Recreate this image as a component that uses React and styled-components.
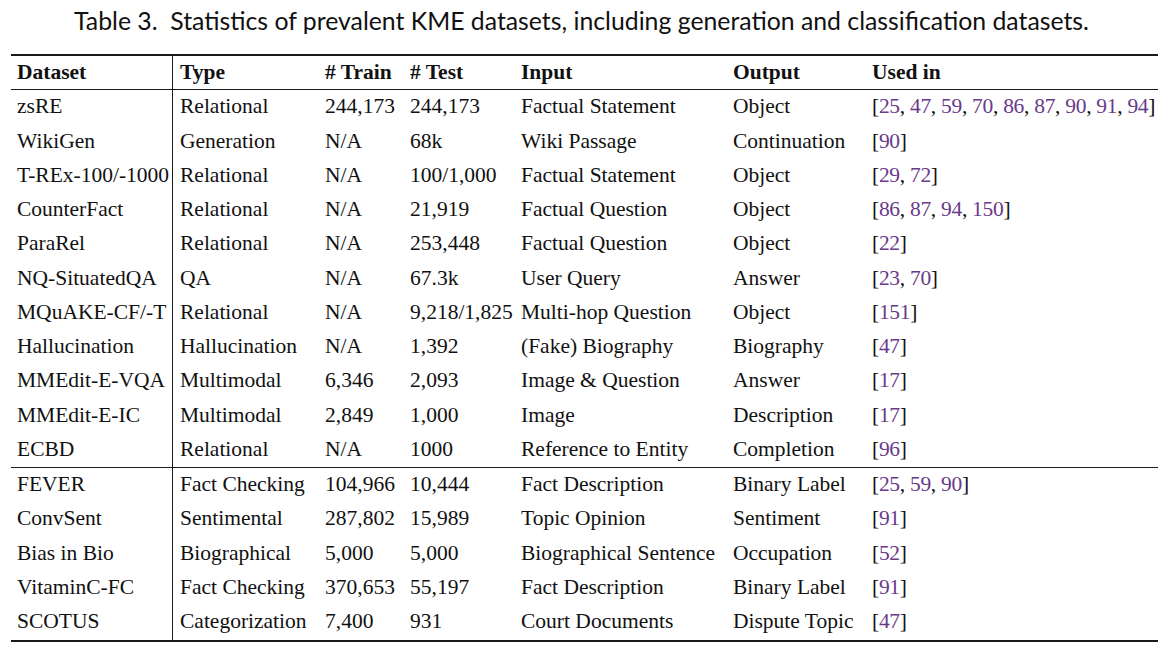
import styled, { createGlobalStyle } from "styled-components";

const GlobalStyle = createGlobalStyle`
  html, body {
    margin: 0;
    padding: 0;
    background: #ffffff;
  }
  body {
    width: 1173px;
    height: 652px;
    overflow: hidden;
  }
`;

const Page = styled.div`
  width: 1173px;
  padding-top: 4px;
  color: #111;
`;

const Caption = styled.div`
  font-family: "Lato", "Open Sans", sans-serif;
  font-size: 24.8px;
  line-height: 33px;
  text-align: center;
  height: 50px;
  padding-right: 10px;
  white-space: pre;
`;

const Table = styled.div`
  margin-left: 11px;
  width: 1147px;
  border-top: 2px solid #1a1a1a;
  border-bottom: 2px solid #1a1a1a;
  font-family: "Liberation Serif", "Times New Roman", serif;
  font-size: 21.5px;
`;

const Row = styled.div`
  display: grid;
  grid-template-columns: 162px 146px 85px 111px 212px 139px 1fr;
  height: 34.27px;
  line-height: 33px;
  border-bottom: ${(p) => (p.$rule ? "1px solid #1a1a1a" : "none")};
  font-weight: ${(p) => (p.$head ? 700 : 400)};
  box-sizing: border-box;
`;

const Cell = styled.div`
  padding-left: ${(p) => (p.$wide ? "7px" : "6px")};
  white-space: nowrap;
  border-right: ${(p) => (p.$divider ? "1px solid #1a1a1a" : "none")};
`;

const RefList = styled.span`
  letter-spacing: -0.3px;
`;

const Cite = styled.span`
  color: #6a3a8a;
`;

const Group = styled.div`
  border-bottom: ${(p) => (p.$rule ? "1px solid #1a1a1a" : "none")};
`;

const Refs = ({ ids }) => (
  <RefList>
    [
    {ids.map((id, i) => (
      <span key={id}>
        <Cite>{id}</Cite>
        {i < ids.length - 1 ? ", " : ""}
      </span>
    ))}
    ]
  </RefList>
);

const editing = [
  ["zsRE", "Relational", "244,173", "244,173", "Factual Statement", "Object", [25, 47, 59, 70, 86, 87, 90, 91, 94]],
  ["WikiGen", "Generation", "N/A", "68k", "Wiki Passage", "Continuation", [90]],
  ["T-REx-100/-1000", "Relational", "N/A", "100/1,000", "Factual Statement", "Object", [29, 72]],
  ["CounterFact", "Relational", "N/A", "21,919", "Factual Question", "Object", [86, 87, 94, 150]],
  ["ParaRel", "Relational", "N/A", "253,448", "Factual Question", "Object", [22]],
  ["NQ-SituatedQA", "QA", "N/A", "67.3k", "User Query", "Answer", [23, 70]],
  ["MQuAKE-CF/-T", "Relational", "N/A", "9,218/1,825", "Multi-hop Question", "Object", [151]],
  ["Hallucination", "Hallucination", "N/A", "1,392", "(Fake) Biography", "Biography", [47]],
  ["MMEdit-E-VQA", "Multimodal", "6,346", "2,093", "Image & Question", "Answer", [17]],
  ["MMEdit-E-IC", "Multimodal", "2,849", "1,000", "Image", "Description", [17]],
  ["ECBD", "Relational", "N/A", "1000", "Reference to Entity", "Completion", [96]],
];

const classification = [
  ["FEVER", "Fact Checking", "104,966", "10,444", "Fact Description", "Binary Label", [25, 59, 90]],
  ["ConvSent", "Sentimental", "287,802", "15,989", "Topic Opinion", "Sentiment", [91]],
  ["Bias in Bio", "Biographical", "5,000", "5,000", "Biographical Sentence", "Occupation", [52]],
  ["VitaminC-FC", "Fact Checking", "370,653", "55,197", "Fact Description", "Binary Label", [91]],
  ["SCOTUS", "Categorization", "7,400", "931", "Court Documents", "Dispute Topic", [47]],
];

const DataRow = ({ row }) => {
  const [name, type, train, test, input, output, refs] = row;
  return (
    <Row>
      <Cell $divider>{name}</Cell>
      <Cell $wide>{type}</Cell>
      <Cell>{train}</Cell>
      <Cell>{test}</Cell>
      <Cell>{input}</Cell>
      <Cell>{output}</Cell>
      <Cell>
        <Refs ids={refs} />
      </Cell>
    </Row>
  );
};

export default function App() {
  return (
    <Page>
      <GlobalStyle />
      <Caption>
        {"Table 3.  Statistics of prevalent KME datasets, including generation and classification datasets."}
      </Caption>
      <Table>
        <Row $head $rule>
          <Cell $divider>Dataset</Cell>
          <Cell $wide>Type</Cell>
          <Cell># Train</Cell>
          <Cell># Test</Cell>
          <Cell>Input</Cell>
          <Cell>Output</Cell>
          <Cell>Used in</Cell>
        </Row>
        <Group $rule>
          {editing.map((r) => (
            <DataRow key={r[0]} row={r} />
          ))}
        </Group>
        <Group>
          {classification.map((r) => (
            <DataRow key={r[0]} row={r} />
          ))}
        </Group>
      </Table>
    </Page>
  );
}
